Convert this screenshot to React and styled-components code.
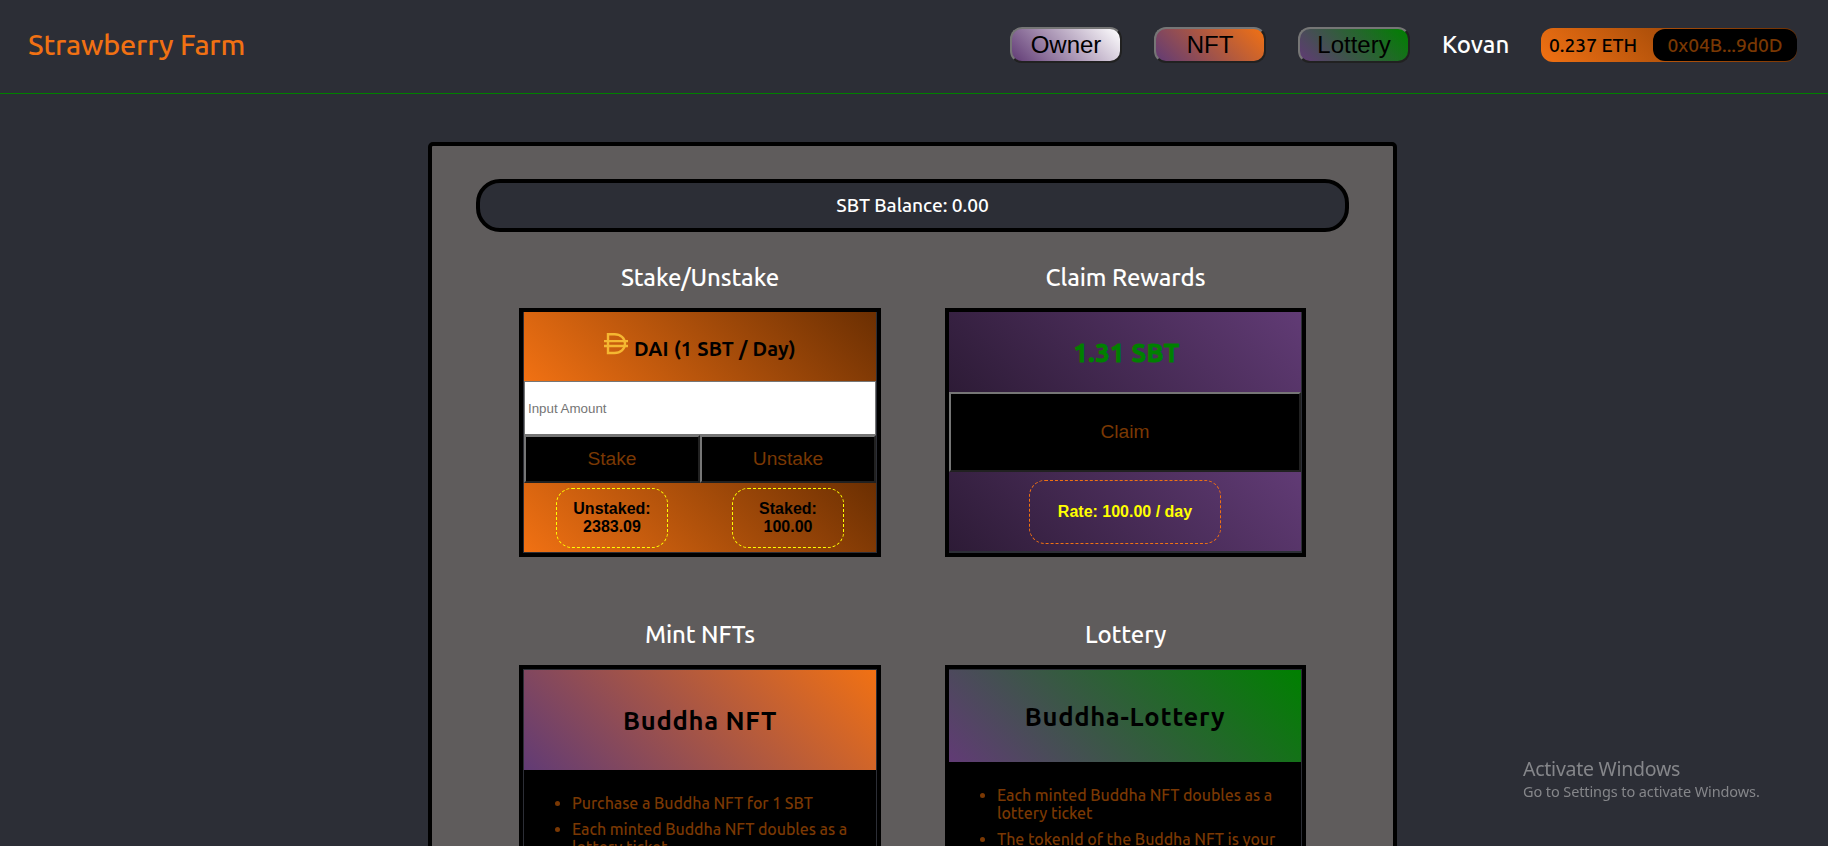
import React from "react";
import styled, { createGlobalStyle, css } from "styled-components";

const color = {
  page: "#2c2e36",
  panel: "#5f5c5c",
  orange: "#f17113",
  brown: "#6b2f02",
  rust: "#7a3803",
  violet: "#613b75",
  plum: "#2d1b36",
  green: "#008000",
  bevelLight: "#767676",
  bevelDark: "#212121",
};

const gradient = {
  owner: `linear-gradient(45deg, ${color.violet}, #ffffff)`,
  nft: `linear-gradient(45deg, ${color.violet}, ${color.orange})`,
  lottery: `linear-gradient(45deg, ${color.violet}, ${color.green})`,
  ember: `linear-gradient(45deg, ${color.orange}, ${color.brown})`,
  dusk: `linear-gradient(45deg, ${color.plum}, ${color.violet})`,
};

const uiFont = `Ubuntu, "Noto Sans", sans-serif`;
const controlFont = `Arial, "Liberation Sans", sans-serif`;

const GlobalStyle = createGlobalStyle`
  * { box-sizing: border-box; }
  html, body { margin: 0; height: 100%; overflow: hidden; }
  body { background: ${color.page}; color: #fff; font-family: ${uiFont}; font-weight: 500; }
`;

const bevel = css`
  border: 2px solid;
  border-color: ${color.bevelLight} ${color.bevelDark} ${color.bevelDark} ${color.bevelLight};
`;

const Header = styled.header`
  display: flex;
  align-items: center;
  justify-content: space-between;
  height: 94px;
  padding: 0 31px 3px 28px;
  border-bottom: 1px solid ${color.green};
`;

const Brand = styled.div`
  padding-bottom: 3px;
  color: ${color.orange};
  font-size: 28.8px;
  line-height: 36px;
  letter-spacing: -0.18px;
`;

const Nav = styled.nav`
  display: flex;
  align-items: center;
`;

const NavButton = styled.button`
  ${bevel}
  width: 112px;
  height: 36px;
  margin-right: 32px;
  padding: 0;
  border-radius: 12px;
  background: ${(p) => gradient[p.$tone]};
  color: #000;
  font: 24px ${controlFont};
`;

const Network = styled.span`
  width: 99px;
  font-size: 24px;
  line-height: 32px;
`;

const Wallet = styled.div`
  display: flex;
  align-items: center;
  justify-content: space-between;
  width: 256px;
  height: 34px;
  padding-left: 8px;
  border-radius: 12px;
  background: ${gradient.ember};
  color: #000;
  font-size: 19.2px;
  line-height: 32px;
`;

const Address = styled.span`
  width: 144px;
  height: 32px;
  border-radius: 12px;
  background: #000;
  color: ${color.rust};
  text-align: center;
  letter-spacing: -0.08px;
`;

const Panel = styled.main`
  width: 969px;
  margin: 48px 0 0 428px;
  padding: 33px 44px 40px;
  border: 4px solid #000;
  border-radius: 5px;
  background: ${color.panel};
`;

const BalanceBar = styled.div`
  height: 53px;
  border: 4px solid #000;
  border-radius: 24px;
  background: ${color.page};
  font-size: 19.2px;
  line-height: 45px;
  text-align: center;
  letter-spacing: -0.07px;
`;

const Grid = styled.div`
  display: grid;
  grid-template-columns: 362px 361px;
  column-gap: 64px;
  row-gap: 59px;
  padding: 27px 0 0 43px;
`;

const Heading = styled.h2`
  margin: 0 0 12px;
  padding-top: 1px;
  font-size: 24px;
  font-weight: 500;
  line-height: 36px;
  text-align: center;
  letter-spacing: -0.1px;
`;

const Card = styled.article`
  border: 4px solid #000;
  background: ${color.page};
  padding: ${(p) => p.$inset};
`;

const CardHeader = styled.div`
  display: flex;
  align-items: center;
  justify-content: center;
  height: ${(p) => p.$height}px;
  background: ${(p) => gradient[p.$tone]};
`;

const TokenLabel = styled.strong`
  margin-left: 6px;
  padding-top: 4px;
  color: #000;
  font-size: 20px;
  line-height: 28px;
  letter-spacing: 0.18px;
`;

const DaiIcon = styled.svg`
  width: 24px;
  height: 22px;
  margin-bottom: 5px;
`;

const Reward = styled.strong`
  padding: 1px 0 0 3px;
  color: ${color.green};
  font-size: 25.6px;
  letter-spacing: 0.5px;
  -webkit-text-stroke: 1px ${color.green};
`;

const Title = styled.h3`
  margin: 0;
  padding-top: 2px;
  color: #000;
  font-size: 25.6px;
  line-height: 32px;
  letter-spacing: 0.7px;
`;

const AmountInput = styled.input`
  display: block;
  width: 100%;
  height: 54px;
  padding: 1px 2px 1px 3px;
  border: 1px solid ${color.bevelLight};
  border-radius: 0;
  background: #fff;
  font: 13.333px ${controlFont};
  &::placeholder { color: #757575; }
`;

const Actions = styled.div`
  display: flex;
`;

const ActionButton = styled.button`
  ${bevel}
  flex: 1;
  height: ${(p) => p.$height}px;
  padding: 0;
  border-radius: 0;
  background: #000;
  color: ${color.rust};
  font: 19.2px ${controlFont};
`;

const CardFooter = styled.div`
  display: flex;
  align-items: center;
  justify-content: space-around;
  height: ${(p) => p.$height}px;
  background: ${(p) => gradient[p.$tone]};
`;

const Stat = styled.div`
  display: flex;
  flex-direction: column;
  align-items: center;
  justify-content: center;
  width: ${(p) => p.$width}px;
  height: ${(p) => p.$height}px;
  border: 1px dashed ${(p) => p.$edge};
  border-radius: 16px;
  color: ${(p) => p.$ink};
  font: bold 16px/18px ${controlFont};
`;

const Notes = styled.ul`
  display: flex;
  flex-direction: column;
  gap: 8px;
  min-height: 220px;
  margin: 0;
  padding: 24px 16px 24px 48px;
  background: #000;
  color: ${color.rust};
  font-size: 16px;
  line-height: 18px;
  letter-spacing: -0.06px;
`;

const Watermark = styled.aside`
  position: fixed;
  left: 1523px;
  top: 755px;
  color: #85868a;
  font-family: "Segoe UI", "Noto Sans", sans-serif;
  font-size: 14.5px;
  font-weight: 400;
  line-height: 18px;
  letter-spacing: -0.1px;
`;

const WatermarkTitle = styled.div`
  font-size: 19.5px;
  line-height: 27px;
  letter-spacing: -0.25px;
`;

export default function App() {
  return (
    <>
      <GlobalStyle />
      <Header>
        <Brand>Strawberry Farm</Brand>
        <Nav>
          <NavButton $tone="owner">Owner</NavButton>
          <NavButton $tone="nft">NFT</NavButton>
          <NavButton $tone="lottery">Lottery</NavButton>
          <Network>Kovan</Network>
          <Wallet>
            0.237 ETH
            <Address>0x04B...9d0D</Address>
          </Wallet>
        </Nav>
      </Header>
      <Panel>
        <BalanceBar>SBT Balance: 0.00</BalanceBar>
        <Grid>
          <section>
            <Heading>Stake/Unstake</Heading>
            <Card $inset="0 1px 1px">
              <CardHeader $height={69} $tone="ember">
                <DaiIcon viewBox="0 0 24 22" fill="none" stroke="#f5b731" strokeWidth="2.4">
                  <path d="M4 1.3H10.5C16.5 1.3 21 5.2 21 10.6S16.5 20 10.5 20H4Z" />
                  <path d="M0 8.1H24M0 13H24" />
                </DaiIcon>
                <TokenLabel>DAI (1 SBT / Day)</TokenLabel>
              </CardHeader>
              <AmountInput placeholder="Input Amount" />
              <Actions>
                <ActionButton $height={48}>Stake</ActionButton>
                <ActionButton $height={48}>Unstake</ActionButton>
              </Actions>
              <CardFooter $height={69} $tone="ember">
                <Stat $width={112} $height={60} $edge="#ffff00" $ink="#000">
                  <span>Unstaked:</span>
                  <span>2383.09</span>
                </Stat>
                <Stat $width={112} $height={60} $edge="#ffff00" $ink="#000">
                  <span>Staked:</span>
                  <span>100.00</span>
                </Stat>
              </CardFooter>
            </Card>
          </section>
          <section>
            <Heading>Claim Rewards</Heading>
            <Card $inset="0 1px 2px 0">
              <CardHeader $height={80} $tone="dusk">
                <Reward>1.31 SBT</Reward>
              </CardHeader>
              <Actions>
                <ActionButton $height={80}>Claim</ActionButton>
              </Actions>
              <CardFooter $height={79} $tone="dusk">
                <Stat $width={192} $height={64} $edge={color.orange} $ink="#ffff00">
                  Rate: 100.00 / day
                </Stat>
              </CardFooter>
            </Card>
          </section>
          <section>
            <Heading>Mint NFTs</Heading>
            <Card $inset="1px 1px 0">
              <CardHeader $height={100} $tone="nft">
                <Title>Buddha NFT</Title>
              </CardHeader>
              <Notes>
                <li>Purchase a Buddha NFT for 1 SBT</li>
                <li>Each minted Buddha NFT doubles as a lottery ticket</li>
              </Notes>
            </Card>
          </section>
          <section>
            <Heading>Lottery</Heading>
            <Card $inset="1px 1px 0 0">
              <CardHeader $height={92} $tone="lottery">
                <Title>Buddha-Lottery</Title>
              </CardHeader>
              <Notes>
                <li>Each minted Buddha NFT doubles as a lottery ticket</li>
                <li>The tokenId of the Buddha NFT is your lottery number</li>
              </Notes>
            </Card>
          </section>
        </Grid>
      </Panel>
      <Watermark>
        <WatermarkTitle>Activate Windows</WatermarkTitle>
        Go to Settings to activate Windows.
      </Watermark>
    </>
  );
}
